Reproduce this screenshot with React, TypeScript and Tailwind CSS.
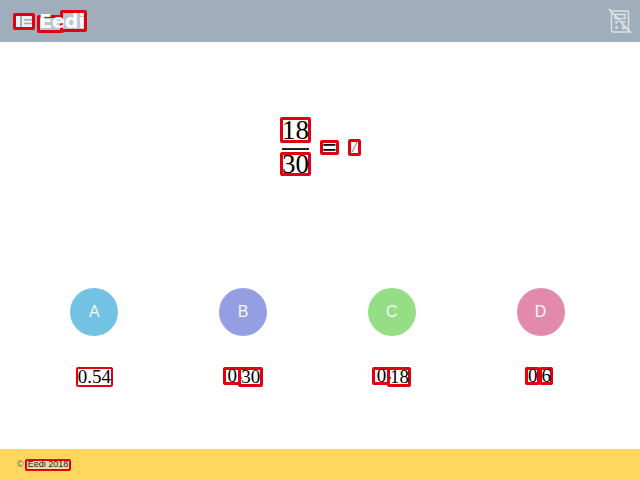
const serif = { fontFamily: '"Liberation Serif", serif' };

function Box({ children, className = "" }: { children: React.ReactNode; className?: string }) {
  return (
    <span className={`relative inline-flex items-center justify-center border-[3px] border-[#e0000f] rounded-[2px] ${className}`}>
      {children}
    </span>
  );
}

function Dot() {
  return <span className="w-0 h-[18px] text-[#e0000f] leading-[12px] -translate-x-[3px]">.</span>;
}

function Answer({ letter, color, shift = "", children }: { letter: string; color: string; shift?: string; children: React.ReactNode }) {
  return (
    <div className="flex flex-col items-center">
      <div className={`w-[48px] h-[48px] rounded-full flex items-center justify-center text-[#f4f8fa] text-[16px] ${color}`}>{letter}</div>
      <div className={`mt-[31px] h-[20px] flex items-start text-[19px] text-black font-['Liberation_Serif',serif] ${shift}`}>{children}</div>
    </div>
  );
}

export default function App() {
  return (
    <div className="w-[640px] h-[480px] flex flex-col bg-white overflow-hidden font-['Liberation_Sans',sans-serif]">
      <header className="h-[42px] shrink-0 bg-[#a0aebc] flex items-center pl-[13px] pr-[8px]">
        <Box className="w-[22px] h-[17px] bg-[#eef0f2]">
          <svg width="16" height="11" viewBox="0 0 16 11">
            <rect x="4" y="0" width="2" height="11" fill="#a0aebc" />
            <rect x="8" y="3" width="8" height="1.6" fill="#a0aebc" />
            <rect x="8" y="6.6" width="8" height="1.6" fill="#a0aebc" />
          </svg>
        </Box>
        <span className="relative ml-[2px] w-[50px] h-[22px] mt-[2px] flex items-center justify-center">
          <span className="absolute left-[0px] top-[4px] w-[27px] h-[18px] border-[3px] border-[#e0000f] rounded-[2px] bg-[#bcc6d0]" />
          <span className="absolute left-[23px] top-[-1px] w-[27px] h-[22px] border-[3px] border-[#e0000f] rounded-[2px] bg-[#bcc6d0]" />
          <span className="relative text-white font-bold text-[19px] leading-none font-['DejaVu_Sans',sans-serif] -mt-[1px]">Eedi</span>
        </span>
        <svg className="ml-auto" width="24" height="26" viewBox="0 0 24 26" fill="none" stroke="#dde2e7" strokeWidth="1.4">
          <rect x="3.5" y="3" width="17" height="21" rx="1.5" />
          <rect x="7" y="6.5" width="10" height="4" />
          <path d="M7 14h3M8.5 12.8v3M14 14h3.5M7.5 18.5l2 2M9.5 18.5l-2 2M14 18.5h3.5M14 20.5h3.5" />
          <path d="M1 1l22 24" strokeWidth="1.8" />
        </svg>
      </header>

      <main className="flex-1 flex flex-col">
        <div className="h-[233px] pt-[75px] flex justify-center items-start pl-[1px] text-[27px] text-black" style={serif}>
          <div className="flex flex-col items-center">
            <Box className="w-[31px] h-[26px]">18</Box>
            <div className="w-[27px] h-[2px] bg-[#222] mt-[5px] mb-[2px]" />
            <Box className="w-[31px] h-[24px]">30</Box>
          </div>
          <div className="flex items-center h-[61px] ml-[9px]">
            <Box className="w-[19px] h-[15px] text-[26px] font-bold leading-none">=</Box>
            <Box className="ml-[9px] w-[13px] h-[17px] text-[14px] font-bold italic text-[#777] leading-none">/</Box>
          </div>
        </div>

        <div className="grid grid-cols-4 pl-[20px] pr-[25px] mt-[13px]">
          <Answer letter="A" color="bg-[#72c2e3]">
            <span className="inline-flex items-center justify-center w-[37px] h-[20px] border-[2px] border-[#e0000f] rounded-[2px]">0.54</span>
          </Answer>
          <Answer letter="B" color="bg-[#949fe3]">
            <Box className="w-[18px] h-[18px]">0</Box>
            <Dot />
            <Box className="w-[25px] h-[20px] -ml-[3px]">30</Box>
          </Answer>
          <Answer letter="C" color="bg-[#96de85]">
            <Box className="w-[18px] h-[18px]">0</Box>
            <Dot />
            <Box className="w-[24px] h-[20px] -ml-[3px]">18</Box>
          </Answer>
          <Answer letter="D" color="bg-[#e38aab]" shift="mr-[3px]">
            <Box className="w-[15px] h-[18px]">0</Box>
            <Dot />
            <Box className="w-[14px] h-[18px] -ml-[1px]">6</Box>
          </Answer>
        </div>
      </main>

      <footer className="h-[31px] shrink-0 bg-[#ffd75e] flex items-center pl-[17px] text-[9px] text-[#5a5a4a]">
        <span>©</span>
        <span className="ml-[1px] h-[12px] border-[2px] border-[#e0000f] bg-[#ecdca0] rounded-[2px] flex items-center px-[1px] text-[#222] text-[9px] leading-none">Eedi 2018</span>
      </footer>
    </div>
  );
}
